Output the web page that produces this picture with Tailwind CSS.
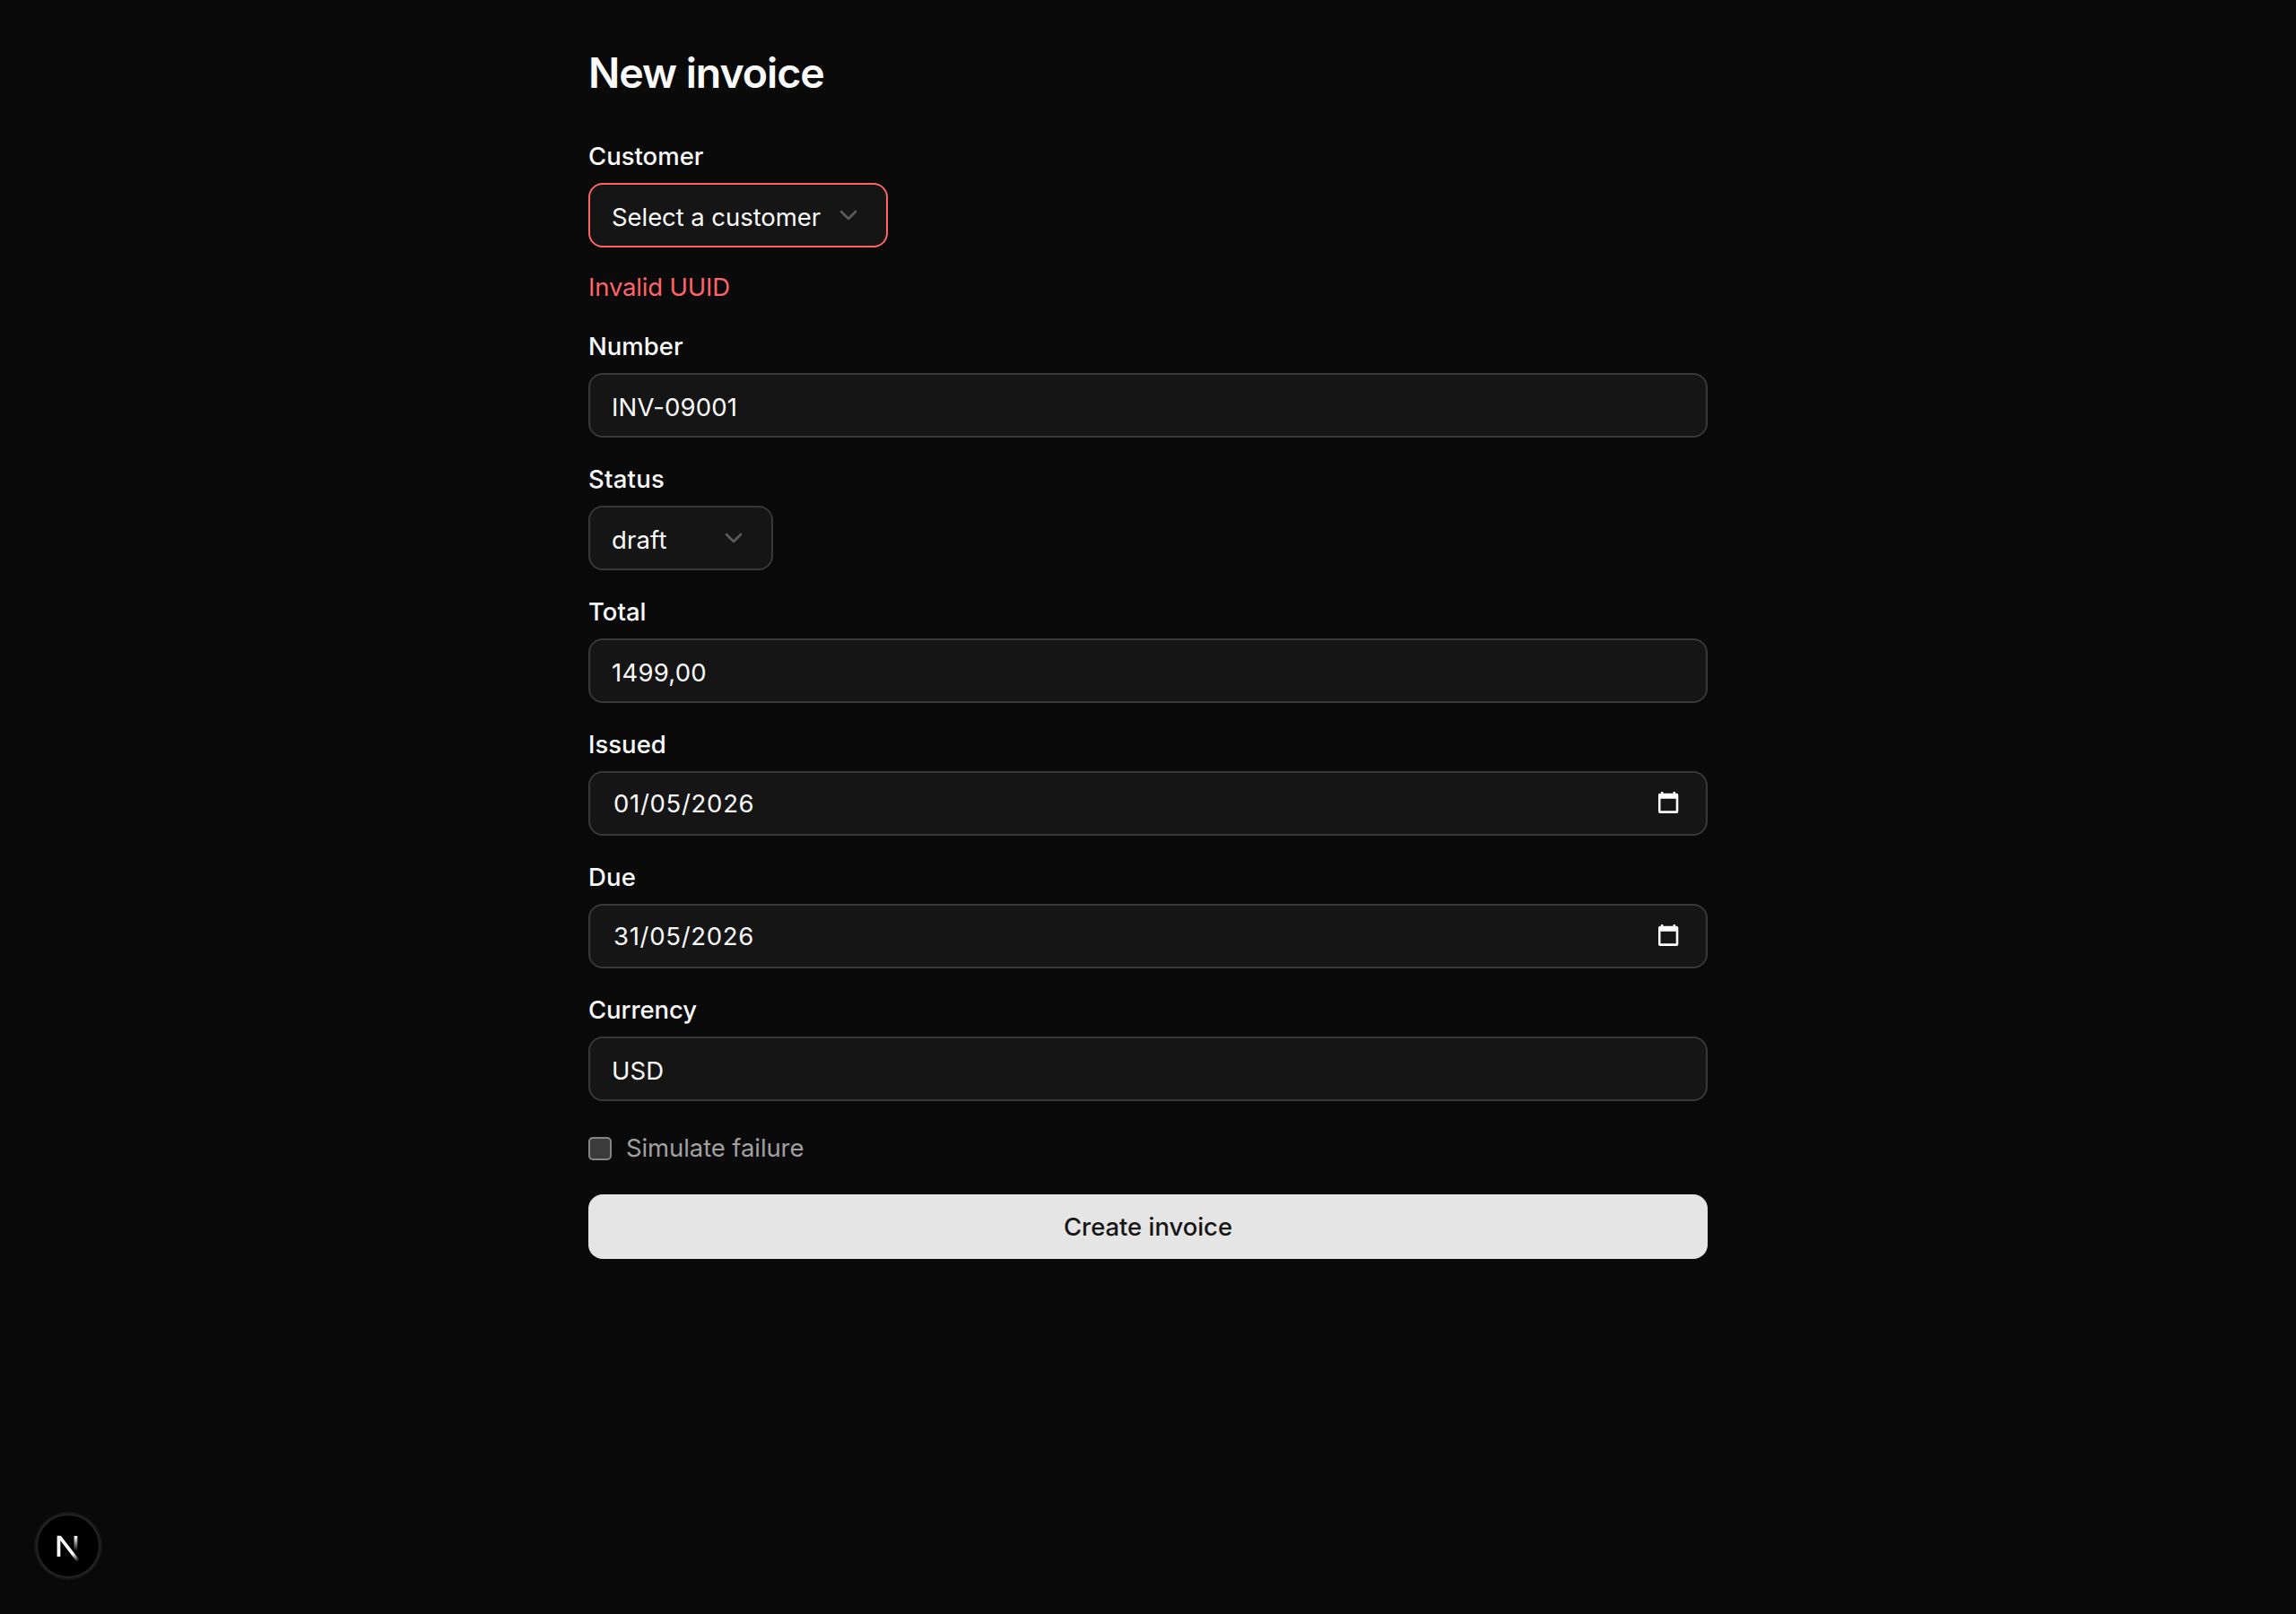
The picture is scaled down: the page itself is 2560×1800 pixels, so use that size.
<!DOCTYPE html>
<html lang="en">
<head>
<meta charset="utf-8">
<title>New invoice</title>
<script src="https://cdn.jsdelivr.net/npm/@tailwindcss/browser@4"></script>
</head>
<body class="min-h-screen bg-[#0a0a0a] font-['Inter',sans-serif] text-[27.5px] leading-7 text-neutral-50 antialiased">
<main class="mx-auto w-[1248px] pt-[49px]">
  <h1 class="text-[46.5px] leading-16 font-semibold tracking-[-1.05px]">New invoice</h1>
  <form class="mt-[47px] flex flex-col gap-8">
    <div class="flex flex-col items-start">
      <label class="font-medium">Customer</label>
      <button type="button" class="mt-4 flex h-18 w-[334px] items-center justify-between rounded-[16px] border-2 border-[#ff6467] bg-[#151515] pr-[26px] pl-6 shadow-[0_2px_4px_rgb(0_0_0/0.05)]">
        <span class="pt-1 tracking-[-0.07px] whitespace-nowrap">Select a customer</span>
        <svg class="size-8 text-[#5b5b5b]" viewBox="0 0 24 24" fill="none" stroke="currentColor" stroke-width="2" stroke-linecap="round" stroke-linejoin="round"><path d="m6 9 6 6 6-6"/></svg>
      </button>
      <p class="mt-6 leading-10 tracking-[-0.17px] text-[#ff6467]">Invalid UUID</p>
    </div>
    <div class="flex flex-col gap-4">
      <label class="font-medium">Number</label>
      <div class="flex h-18 items-center rounded-[16px] border-2 border-[#383838] bg-[#151515] px-6 pt-1 tracking-[0.18px] shadow-[0_2px_4px_rgb(0_0_0/0.05)]">INV-09001</div>
    </div>
    <div class="flex flex-col items-start gap-4">
      <label class="font-medium tracking-[0.24px]">Status</label>
      <button type="button" class="flex h-18 w-[206px] items-center justify-between rounded-[16px] border-2 border-[#383838] bg-[#151515] pr-[26px] pl-6 shadow-[0_2px_4px_rgb(0_0_0/0.05)]">
        <span class="pt-1 tracking-[0.15px]">draft</span>
        <svg class="size-8 text-[#5b5b5b]" viewBox="0 0 24 24" fill="none" stroke="currentColor" stroke-width="2" stroke-linecap="round" stroke-linejoin="round"><path d="m6 9 6 6 6-6"/></svg>
      </button>
    </div>
    <div class="flex flex-col gap-4">
      <label class="font-medium">Total</label>
      <div class="flex h-18 items-center rounded-[16px] border-2 border-[#383838] bg-[#151515] px-6 pt-1 tracking-[0.23px] shadow-[0_2px_4px_rgb(0_0_0/0.05)]">1499,00</div>
    </div>
    <div class="flex flex-col gap-4">
      <label class="font-medium">Issued</label>
      <div class="flex h-18 items-center justify-between rounded-[16px] border-2 border-[#383838] bg-[#151515] pr-7 pl-[26px] tracking-[0.7px] shadow-[0_2px_4px_rgb(0_0_0/0.05)]">
        <span>01/05/2026</span>
        <svg class="mb-[2px] h-6 w-7" viewBox="0 0 28 24" fill="#fff"><path fill-rule="evenodd" d="M6 0h2.4v1.7h11.2V0H22v1.7h1.3a2 2 0 0 1 2 2V22a2 2 0 0 1-2 2H5a2 2 0 0 1-2-2V3.700a2 2 0 0 1 2-2h1zM5.500 7.700v13.500h17.200V7.700z"/></svg>
      </div>
    </div>
    <div class="flex flex-col gap-4">
      <label class="font-medium tracking-[0.2px]">Due</label>
      <div class="flex h-18 items-center justify-between rounded-[16px] border-2 border-[#383838] bg-[#151515] pr-7 pl-[26px] tracking-[0.7px] shadow-[0_2px_4px_rgb(0_0_0/0.05)]">
        <span>31/05/2026</span>
        <svg class="mb-[2px] h-6 w-7" viewBox="0 0 28 24" fill="#fff"><path fill-rule="evenodd" d="M6 0h2.4v1.7h11.2V0H22v1.7h1.3a2 2 0 0 1 2 2V22a2 2 0 0 1-2 2H5a2 2 0 0 1-2-2V3.700a2 2 0 0 1 2-2h1zM5.500 7.700v13.500h17.200V7.700z"/></svg>
      </div>
    </div>
    <div class="flex flex-col gap-4">
      <label class="font-medium tracking-[-0.1px]">Currency</label>
      <div class="flex h-18 items-center rounded-[16px] border-2 border-[#383838] bg-[#151515] px-6 pt-1 tracking-[0.1px] shadow-[0_2px_4px_rgb(0_0_0/0.05)]">USD</div>
    </div>
    <label class="mt-2 flex h-[26px] items-center gap-4 tracking-[-0.1px] text-[#a1a1a1]">
      <span class="size-[26px] rounded-[5px] border-2 border-[#858585] bg-[#3b3b3b]"></span>
      <span class="pb-[2px]">Simulate failure</span>
    </label>
    <button type="button" class="mt-[6px] h-18 rounded-[16px] bg-neutral-200 font-medium tracking-[-0.05px] text-neutral-900">Create invoice</button>
  </form>
</main>
<!-- dev tools indicator -->
<div class="fixed bottom-10 left-10 size-18 rounded-full bg-black shadow-[0_0_0_2px_#171717,inset_0_0_0_2px_rgb(255_255_255/0.14),0_16px_32px_-8px_rgb(0_0_0/0.24)]">
  <svg class="size-18" viewBox="-10.4 -11.35 36 36" fill="none">
    <defs>
      <linearGradient id="g0" x1="9.956" y1="11.123" x2="15.478" y2="17.967" gradientUnits="userSpaceOnUse"><stop stop-color="#fff"/><stop offset=".604" stop-color="#fff" stop-opacity="0"/></linearGradient>
      <linearGradient id="g1" x1="11.822" y1="1.4" x2="11.791" y2="9.625" gradientUnits="userSpaceOnUse"><stop stop-color="#fff"/><stop offset="1" stop-color="#fff" stop-opacity="0"/></linearGradient>
      <clipPath id="c"><rect x="0" y="1" width="18" height="18"/></clipPath>
    </defs>
    <g clip-path="url(#c)">
      <path d="M13.3 15.2 2.34 1V12.6" stroke="url(#g0)" stroke-width="1.86"/>
      <path d="M11.825 1V13.1" stroke="url(#g1)" stroke-width="1.86"/>
    </g>
  </svg>
</div>
</body>
</html>
